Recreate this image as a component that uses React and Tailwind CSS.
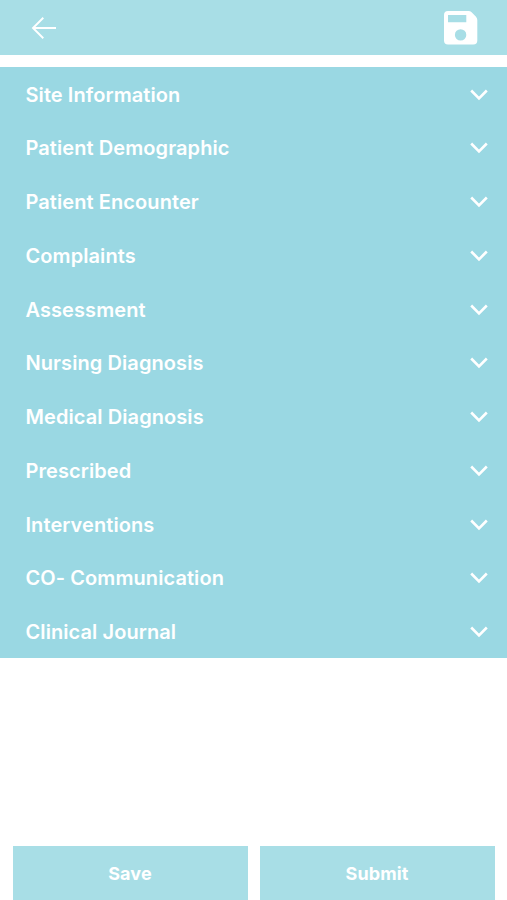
// ── Form sections ─────────────────────────────────────────────────────────────
const SECTIONS = [
  "Site Information",
  "Patient Demographic",
  "Patient Encounter",
  "Complaints",
  "Assessment",
  "Nursing Diagnosis",
  "Medical Diagnosis",
  "Prescribed",
  "Interventions",
  "CO- Communication",
  "Clinical Journal",
];

// ── Icons ─────────────────────────────────────────────────────────────────────
const BackIcon = () => (
  <svg width="26" height="24" viewBox="0 0 26 24" fill="none" stroke="currentColor" strokeWidth="1.9">
    <path d="M25 12H2M12.3 1.8L2 12l10.3 10.2" />
  </svg>
);

const SaveIcon = () => (
  <svg width="34" height="34" viewBox="0 0 34 34" fill="currentColor">
    <path
      fillRule="evenodd"
      d="M4 0H24.5q1.8 0 3.1 1.3l4.2 4.2Q33.3 7 33.3 9V29.5a4 4 0 0 1-4 4H4a4 4 0 0 1-4-4V4A4 4 0 0 1 4 0zM4 4v7.2h18.3V4zM16.6 18.2a5.7 5.7 0 1 0 0 11.4 5.7 5.7 0 0 0 0-11.4z"
    />
  </svg>
);

const ChevronIcon = () => (
  <svg width="18" height="12" viewBox="0 0 18 12" fill="none" stroke="currentColor" strokeWidth="2.6">
    <path d="M1.2 1.5L9 9.3l7.8-7.8" />
  </svg>
);

const SectionRow = ({ title }) => (
  <button className="flex h-[53.75px] w-full items-center justify-between pt-[1.5px] pr-[19px] pl-[25.5px] text-left">
    <span className="text-[20px] leading-6 font-semibold tracking-[0.08px]">{title}</span>
    <ChevronIcon />
  </button>
);

const FooterButton = ({ children }) => (
  <button className="h-[54px] flex-1 bg-[#a8dee6] text-[18px] font-bold tracking-[0.1px]">
    {children}
  </button>
);

export default function App() {
  return (
    <div className="flex h-screen w-full flex-col bg-white font-['Inter','Liberation_Sans',sans-serif] text-white">
      <header className="flex h-[54.5px] shrink-0 items-center justify-between bg-[#a8dee6] pt-px pr-[29px] pl-[31px]">
        <button aria-label="Back"><BackIcon /></button>
        <button aria-label="Save"><SaveIcon /></button>
      </header>

      <main className="mt-[12.5px] bg-[#9ad8e3]">
        {SECTIONS.map((title) => (
          <SectionRow key={title} title={title} />
        ))}
      </main>

      <footer className="mt-auto flex gap-3 px-[12.5px]">
        <FooterButton>Save</FooterButton>
        <FooterButton>Submit</FooterButton>
      </footer>
    </div>
  );
}
